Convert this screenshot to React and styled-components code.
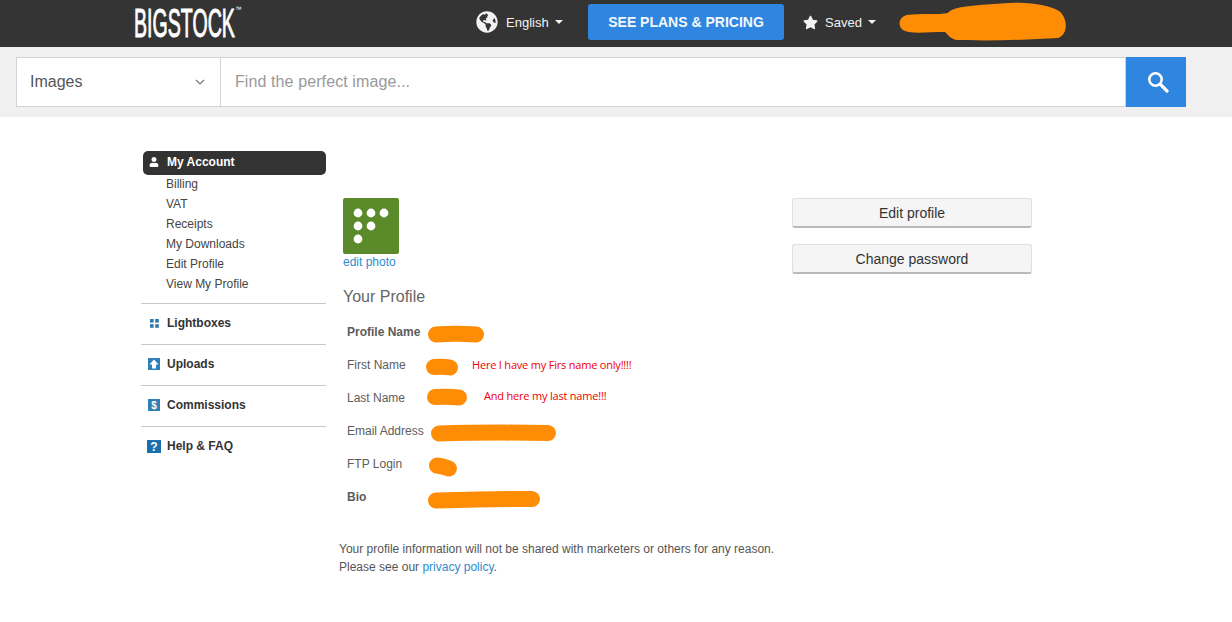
import React from "react";
import styled, { createGlobalStyle } from "styled-components";
import { FaGlobeAmericas, FaStar, FaUser } from "react-icons/fa";

const GlobalStyle = createGlobalStyle`
  body {
    margin: 0;
    background: #fff;
    font-family: "Liberation Sans", Arial, sans-serif;
    color: #333;
  }
`;

const TopBar = styled.header`
  height: 47px;
  box-sizing: border-box;
  padding-bottom: 3px;
  background: #343434;
  display: flex;
  align-items: center;
  color: #f2f2f2;
  font-size: 13px;
`;

const LogoBox = styled.div`
  width: 102px;
  margin-left: 134px;
  height: 44px;
  display: flex;
  align-items: center;
`;

const Logo = styled.span`
  display: inline-block;
  font-size: 41px;
  line-height: 44px;
  color: #fff;
  -webkit-text-stroke: 1px #fff;
  transform: scaleX(0.478);
  transform-origin: left center;
  white-space: nowrap;
  position: relative;
  top: 1px;

  sup {
    font-size: 8px;
    -webkit-text-stroke: 0;
    position: absolute;
    top: 5px;
    left: 212px;
    line-height: 1;
    transform: scaleX(1.6);
    transform-origin: left top;
  }
`;

const Lang = styled.div`
  display: flex;
  align-items: center;
  margin-left: 240px;
  width: 112px;

  svg {
    margin-right: 8px;
  }
`;

const Caret = styled.i`
  display: inline-block;
  margin-left: 6px;
  border-left: 4px solid transparent;
  border-right: 4px solid transparent;
  border-top: 4px solid #f2f2f2;
`;

const PlansButton = styled.button`
  width: 196px;
  height: 36px;
  border: 0;
  border-radius: 3px;
  background: #2e86e0;
  color: #f4f8fd;
  font: bold 14px "Liberation Sans", Arial, sans-serif;
`;

const SavedMenu = styled.div`
  display: flex;
  align-items: center;
  margin-left: 19px;
  width: 95px;

  svg {
    margin-right: 7px;
  }
`;

const SearchRow = styled.div`
  height: 50px;
  padding: 10px 46px 10px 16px;
  background: #f0f0f0;
  display: flex;
`;

const ImageSelect = styled.div`
  width: 205px;
  box-sizing: border-box;
  background: #fff;
  border: 1px solid #d2d2d2;
  display: flex;
  align-items: center;
  justify-content: space-between;
  padding: 0 15px 0 13px;
  font-size: 16px;
  color: #555;
`;

const SearchInput = styled.div`
  flex: 1;
  box-sizing: border-box;
  background: #fff;
  border: 1px solid #d2d2d2;
  border-left: 0;
  display: flex;
  align-items: center;
  padding-left: 14px;
  font-size: 16px;
  letter-spacing: 0.1px;
  color: #999;
`;

const SearchButton = styled.div`
  width: 60px;
  padding-left: 3px;
  box-sizing: border-box;
  background: #2e86e0;
  display: flex;
  align-items: center;
  justify-content: center;
`;

const Content = styled.div`
  display: flex;
  padding: 34px 0 0 141px;
`;

const Sidebar = styled.nav`
  width: 185px;
  flex: none;
`;

const ActiveItem = styled.div`
  margin-left: 2px;
  height: 24px;
  box-sizing: border-box;
  padding: 0 0 2px 6px;
  border-radius: 5px;
  background: #333;
  color: #fff;
  font-size: 12px;
  font-weight: bold;
  display: flex;
  align-items: center;

  svg {
    margin-right: 8px;
  }
`;

const SubList = styled.ul`
  list-style: none;
  margin: -1px 0 9px;
  padding: 0 0 0 25px;
  font-size: 12px;
  line-height: 20px;
  color: #444;
`;

const NavGroup = styled.div`
  height: 41px;
  box-sizing: border-box;
  padding-bottom: 2px;
  border-top: 1px solid #c8c8c8;
  display: flex;
  align-items: center;
  font-size: 12px;
  font-weight: bold;
  color: #333;
`;

const NavIcon = styled.span`
  width: 26px;
  display: flex;
  justify-content: center;
  flex: none;
`;

const Main = styled.main`
  width: 449px;
  flex: none;
  padding: 47px 0 0 17px;
  box-sizing: content-box;
`;

const Avatar = styled.div`
  width: 56px;
  height: 56px;
  border-radius: 2px;
  background: #5a8a2a;
  display: block;
`;

const PhotoLink = styled.a`
  display: block;
  margin-top: 1px;
  font-size: 12px;
  line-height: 14px;
  color: #2f8bd0;
`;

const Title = styled.h2`
  margin: 18px 0 0;
  font-size: 16px;
  line-height: 20px;
  font-weight: normal;
  color: #666;
`;

const Rows = styled.div`
  margin-top: 17px;
  padding-left: 4px;
`;

const Row = styled.div`
  height: 33px;
  display: flex;
  align-items: flex-start;
`;

const Label = styled.span`
  width: 79px;
  flex: none;
  font-size: 12px;
  line-height: 16px;
  font-weight: ${({ $bold }) => ($bold ? "bold" : "normal")};
  color: #5c5c5c;
`;

const Note = styled.span`
  font-family: "Open Sans", sans-serif;
  font-size: 11px;
  line-height: 14px;
  letter-spacing: -0.2px;
  color: #f00000;
  white-space: nowrap;
  margin-left: ${({ $left }) => $left}px;
  margin-top: ${({ $top }) => $top}px;
`;

const Privacy = styled.p`
  margin: 18px 0 0 -4px;
  font-size: 12px;
  line-height: 18px;
  color: #555;
  white-space: nowrap;

  a {
    color: #2f8bd0;
  }
`;

const Actions = styled.aside`
  padding-top: 47px;
  width: 240px;
  display: flex;
  flex-direction: column;
  gap: 16px;
`;

const ActionButton = styled.button`
  height: 30px;
  border: 1px solid #e0e0e0;
  border-bottom: 2px solid #b9b9b9;
  border-radius: 3px;
  background: #f5f5f5;
  color: #333;
  font: 14px "Liberation Sans", Arial, sans-serif;
  padding: 0;
`;

const ScribbleSvg = styled.svg`
  display: block;
  flex: none;
  overflow: visible;
  margin-left: ${({ $left }) => $left}px;
  margin-top: ${({ $top }) => $top}px;
`;

const Scribble = ({ width, height = 16, left = 0, top = 2, d }) => (
  <ScribbleSvg $left={left} $top={top} width={width} height={height} viewBox={`0 0 ${width} ${height}`}>
    <path d={d} fill="none" stroke="#ff8c05" strokeWidth="16" strokeLinecap="round" strokeLinejoin="round" />
  </ScribbleSvg>
);

const HeaderScribble = styled.svg`
  display: block;
  flex: none;
`;

const DotIcon = () => (
  <svg width="56" height="56" viewBox="0 0 56 56">
    <g fill="#fff">
      <circle cx="15" cy="15" r="4.4" />
      <circle cx="28" cy="15" r="4.4" />
      <circle cx="41" cy="15" r="4.4" />
      <circle cx="15" cy="28" r="4.4" />
      <circle cx="28" cy="28" r="4.4" />
      <circle cx="15" cy="41" r="4.4" />
    </g>
  </svg>
);

const GridIcon = () => (
  <svg width="9" height="9" viewBox="0 0 9 9">
    <g fill="#2f79a8">
      <rect width="3.6" height="3.6" />
      <rect x="5.2" width="3.6" height="3.6" />
      <rect y="5.2" width="3.6" height="3.6" />
      <rect x="5.2" y="5.2" width="3.6" height="3.6" />
    </g>
  </svg>
);

const UploadIcon = () => (
  <svg width="12" height="12" viewBox="0 0 12 12">
    <rect width="12" height="12" fill="#2f7fb8" />
    <path d="M6 1.5 10.5 6.5H8V10.5H4V6.5H1.5Z" fill="#fff" />
  </svg>
);

const DollarIcon = () => (
  <svg width="12" height="12" viewBox="0 0 12 12">
    <rect width="12" height="12" fill="#2f7fb8" />
    <text x="6" y="10" textAnchor="middle" fontSize="10" fontWeight="bold" fontFamily="Liberation Sans" fill="#fff">$</text>
  </svg>
);

const HelpIcon = () => (
  <svg width="14" height="13" viewBox="0 0 14 13">
    <rect width="14" height="13" fill="#1c6fae" />
    <text x="7" y="11" textAnchor="middle" fontSize="12" fontWeight="bold" fontFamily="Liberation Sans" fill="#fff">?</text>
  </svg>
);

const SearchIcon = () => (
  <svg width="22" height="22" viewBox="0 0 22 22">
    <circle cx="8.5" cy="8.5" r="6.2" fill="none" stroke="#fff" strokeWidth="2.6" />
    <path d="M13.2 13.2 20 20" stroke="#fff" strokeWidth="3.2" strokeLinecap="round" />
  </svg>
);

const Chevron = () => (
  <svg width="10" height="6" viewBox="0 0 10 6">
    <path d="M1 1 5 5 9 1" fill="none" stroke="#777" strokeWidth="1.2" />
  </svg>
);

const subItems = ["Billing", "VAT", "Receipts", "My Downloads", "Edit Profile", "View My Profile"];

const navGroups = [
  { label: "Lightboxes", icon: <GridIcon /> },
  { label: "Uploads", icon: <UploadIcon /> },
  { label: "Commissions", icon: <DollarIcon /> },
  { label: "Help & FAQ", icon: <HelpIcon /> },
];

export default function App() {
  return (
    <>
      <GlobalStyle />
      <TopBar>
        <LogoBox>
          <Logo>
            BIGSTOCK<sup>™</sup>
          </Logo>
        </LogoBox>
        <Lang>
          <FaGlobeAmericas size={22} color="#f2f2f2" />
          English
          <Caret />
        </Lang>
        <PlansButton>SEE PLANS &amp; PRICING</PlansButton>
        <SavedMenu>
          <FaStar size={15} color="#f2f2f2" />
          Saved
          <Caret />
        </SavedMenu>
        <HeaderScribble width="170" height="40" viewBox="0 0 170 40">
          <path
            d="M9 13C22 11 40 13 50 11C54 4 80 3 112 1C134 0 158 4 164 12C170 20 169 33 160 36C130 38 90 39 58 38C52 36 50 33 47 30C30 30 14 32 7 29C-1 26 0 15 9 13Z"
            fill="#ff8c05"
          />
        </HeaderScribble>
      </TopBar>
      <SearchRow>
        <ImageSelect>
          Images
          <Chevron />
        </ImageSelect>
        <SearchInput>Find the perfect image...</SearchInput>
        <SearchButton>
          <SearchIcon />
        </SearchButton>
      </SearchRow>
      <Content>
        <Sidebar>
          <ActiveItem>
            <FaUser size={10} color="#fff" />
            My Account
          </ActiveItem>
          <SubList>
            {subItems.map((item) => (
              <li key={item}>{item}</li>
            ))}
          </SubList>
          {navGroups.map((group) => (
            <NavGroup key={group.label}>
              <NavIcon>{group.icon}</NavIcon>
              {group.label}
            </NavGroup>
          ))}
        </Sidebar>
        <Main>
          <Avatar>
            <DotIcon />
          </Avatar>
          <PhotoLink>edit photo</PhotoLink>
          <Title>Your Profile</Title>
          <Rows>
            <Row>
              <Label $bold>Profile Name</Label>
              <Scribble left={2} width={56} d="M8 8.5C20 7.5 36 7.5 48 8.5" />
            </Row>
            <Row>
              <Label>First Name</Label>
              <Scribble width={32} d="M8 8C13 7.5 19 7.5 24 8.5" />
              <Note $left={14} $top={1}>Here I have my Firs name only!!!!</Note>
            </Row>
            <Row>
              <Label>Last Name</Label>
              <Scribble left={1} top={-1} width={40} d="M8 8C16 7.5 24 7.5 32 8.5" />
              <Note $left={17} $top={-1}>And here my last name!!!</Note>
            </Row>
            <Row>
              <Label>Email Address</Label>
              <Scribble left={5} width={125} d="M8 8.5C40 7.5 85 7.5 117 8" />
            </Row>
            <Row>
              <Label>FTP Login</Label>
              <Scribble left={3} width={28} height={18} d="M8 7.5C12 8 16 9 20 10.5" />
            </Row>
            <Row>
              <Label $bold>Bio</Label>
              <Scribble left={2} width={112} height={17} d="M8 9.5C40 8.5 75 7.5 104 8" />
            </Row>
          </Rows>
          <Privacy>
            Your profile information will not be shared with marketers or others for any reason.
            <br />
            Please see our <a>privacy policy</a>.
          </Privacy>
        </Main>
        <Actions>
          <ActionButton>Edit profile</ActionButton>
          <ActionButton>Change password</ActionButton>
        </Actions>
      </Content>
    </>
  );
}
